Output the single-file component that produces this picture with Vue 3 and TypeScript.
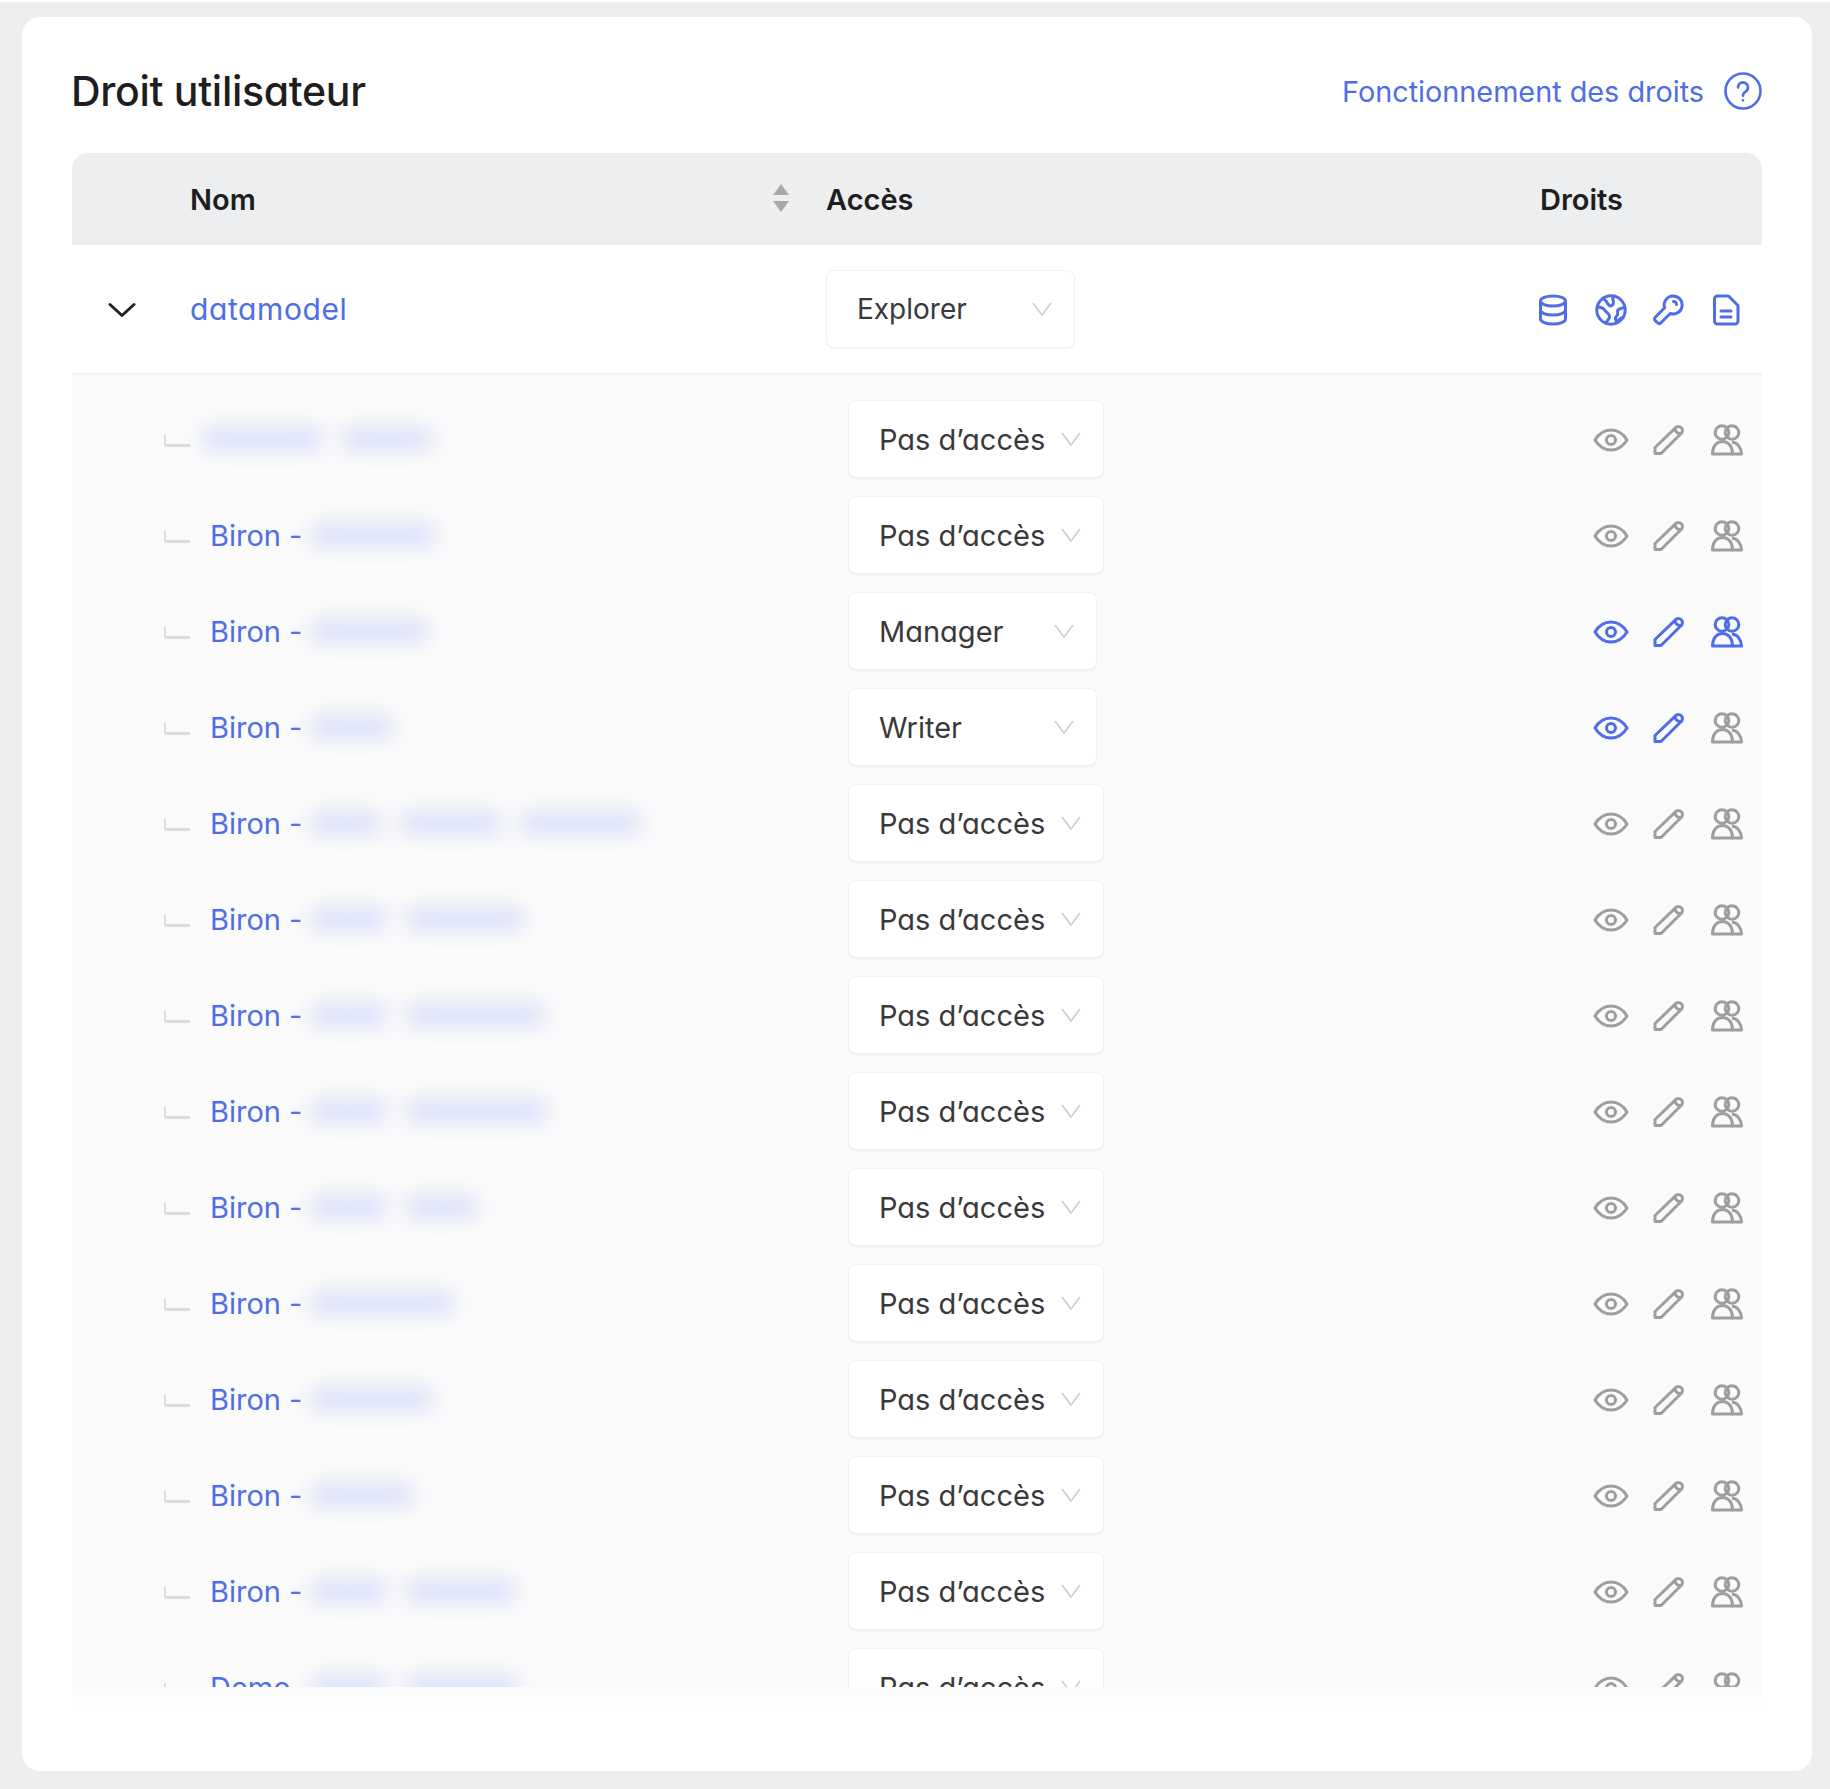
<script setup lang="ts">
type Access = 'Pas d’accès' | 'Manager' | 'Writer'

interface Child {
  prefix: string
  blobs: number[]
  access: Access
}

const none: Access = 'Pas d’accès'

const children: Child[] = [
  { prefix: '', blobs: [120, 90], access: none },
  { prefix: 'Biron -', blobs: [125], access: none },
  { prefix: 'Biron -', blobs: [118], access: 'Manager' },
  { prefix: 'Biron -', blobs: [83], access: 'Writer' },
  { prefix: 'Biron -', blobs: [70, 100, 121], access: none },
  { prefix: 'Biron -', blobs: [76, 118], access: none },
  { prefix: 'Biron -', blobs: [76, 139], access: none },
  { prefix: 'Biron -', blobs: [76, 141], access: none },
  { prefix: 'Biron -', blobs: [76, 71], access: none },
  { prefix: 'Biron -', blobs: [144], access: none },
  { prefix: 'Biron -', blobs: [123], access: none },
  { prefix: 'Biron -', blobs: [103], access: none },
  { prefix: 'Biron -', blobs: [76, 109], access: none },
  { prefix: 'Demo -', blobs: [76, 112], access: none },
]

// how many of eye / pen / users are lit for an access level
function rightsLevel(access: Access): number {
  if (access === 'Manager') return 3
  if (access === 'Writer') return 2
  return 0
}
</script>

<template>
  <div class="page">
    <div class="card">
      <header class="head">
        <h1 class="title">Droit utilisateur</h1>
        <a class="help">
          <span>Fonctionnement des droits</span>
          <svg class="help-icon" viewBox="0 0 38 38" fill="none" stroke="currentColor" stroke-width="2.6" stroke-linecap="round">
            <circle cx="19" cy="19" r="17.5" />
            <path d="M14 15.5a5 5 0 1 1 7.6 4.2c-1.8 1.1-2.6 2.1-2.6 4" />
            <path d="M19 28.2v.1" />
          </svg>
        </a>
      </header>

      <div class="table">
        <div class="thead">
          <span class="th-name">Nom</span>
          <span class="sort"><i class="up"></i><i class="down"></i></span>
          <span class="th-access">Accès</span>
          <span class="th-rights">Droits</span>
        </div>

        <div class="root-row">
          <span class="toggle">
            <svg viewBox="0 0 28 16" fill="none" stroke="currentColor" stroke-width="3" stroke-linecap="round" stroke-linejoin="round">
              <path d="M2 2.500l12 11 12-11" />
            </svg>
          </span>
          <span class="root-name">datamodel</span>
          <div class="select root-select">
            <span>Explorer</span>
            <svg class="caret" viewBox="0 0 20 14" fill="none" stroke="currentColor" stroke-width="1.8"><path d="M1 1l9 12 9-12" /></svg>
          </div>
          <div class="icons on">
            <svg viewBox="0 0 32 32" fill="none" stroke="currentColor" stroke-width="3">
              <ellipse cx="16" cy="7" rx="12.5" ry="5" />
              <path d="M3.5 7v18c0 2.8 5.6 5 12.5 5s12.5-2.2 12.5-5V7" />
              <path d="M3.5 16c0 2.8 5.6 5 12.5 5s12.5-2.2 12.5-5" />
            </svg>
            <svg viewBox="0 0 32 32" fill="none" stroke="currentColor" stroke-width="3" stroke-linejoin="round" stroke-linecap="round">
              <circle cx="16" cy="16" r="14.2" />
              <path d="M8 4.500c2.500 1.500 4 3.500 5 5.500s3 2.500 4.500 1 1-3.500.5-5 0-3 1.500-4" />
              <path d="M2.500 13c3 0 6 1 7.500 3.500s4.500 2.500 4.500 6-3 3.500-3.500 7" />
              <path d="M29.500 13c-2 2-5 1-6.500 3s1 3.500-1 5.500-2 4.500 0 7" />
              <path d="M22 28.500c1-2 3-4 6-5" />
            </svg>
            <svg viewBox="0 0 32 32" fill="none" stroke="currentColor" stroke-width="3" stroke-linejoin="round" stroke-linecap="round">
              <path d="M20 2a9 9 0 1 1-2.800 17.500L8 28.800a2.500 2.500 0 0 1-3.500 0l-2.200-2.200a2.400 2.400 0 0 1 0-3.400l9.300-9.400A9 9 0 0 1 20 2z" />
              <path d="M20.500 7.500a3 3 0 0 1 3 3" />
            </svg>
            <svg viewBox="0 0 32 32" fill="none" stroke="currentColor" stroke-width="3" stroke-linejoin="round" stroke-linecap="round">
              <path d="M6.500 2h11l9.500 9.500V27a3 3 0 0 1-3 3H6.500a3 3 0 0 1-3-3V5a3 3 0 0 1 3-3z" />
              <path d="M10 17h10M10 23h10" />
            </svg>
          </div>
        </div>

        <div class="children">
          <div v-for="(child, i) in children" :key="i" class="child-row">
            <span class="connector"></span>
            <div class="name">
              <span v-if="child.prefix" class="prefix">{{ child.prefix }}</span>
              <span
                v-for="(w, j) in child.blobs"
                :key="j"
                class="blob"
                :class="{ bare: !child.prefix && j === 0 }"
                :style="{ width: w + 'px' }"
              ></span>
            </div>
            <div class="select" :class="child.access === none ? 'wide' : 'narrow'">
              <span>{{ child.access }}</span>
              <svg class="caret" viewBox="0 0 20 14" fill="none" stroke="currentColor" stroke-width="1.8"><path d="M1 1l9 12 9-12" /></svg>
            </div>
            <div class="icons">
              <svg :class="{ lit: rightsLevel(child.access) >= 1 }" viewBox="0 0 36 32" fill="none" stroke="currentColor" stroke-width="3">
                <path d="M2 16C6 9.500 11 6 18 6s12 3.500 16 10c-4 6.500-9 10-16 10S6 22.500 2 16z" />
                <circle cx="18" cy="16" r="4.500" />
              </svg>
              <svg :class="{ lit: rightsLevel(child.access) >= 2 }" viewBox="0 0 32 32" fill="none" stroke="currentColor" stroke-width="3" stroke-linejoin="round" stroke-linecap="round">
                <path d="M22.500 3.800a4 4 0 1 1 5.600 5.700L8 29.500H2v-6z" />
                <path d="M22.500 3.800c-.8 1.800 0 3.200 1 4.200s2.500 1.900 4.600 1.500" />
              </svg>
              <svg :class="{ lit: rightsLevel(child.access) >= 3 }" viewBox="0 0 32 32" fill="none" stroke="currentColor" stroke-width="3" stroke-linejoin="round">
                <circle cx="11" cy="8.500" r="6.800" />
                <circle cx="21" cy="8.500" r="6.800" />
                <path d="M1.500 30c0-7.500 4-12.500 10-12.500S21.500 22.500 21.500 30z" />
                <path d="M21 18c5.500.5 9 5.500 9.500 12h-9" />
              </svg>
            </div>
          </div>
        </div>
        <div class="fade"></div>
      </div>
    </div>
  </div>
</template>

<style scoped>
.page {
  box-sizing: border-box;
  width: 1830px;
  height: 1789px;
  padding: 15px 18px 18px 22px;
  background: #eceef0;
  border-top: 2px solid #fff;
  font-family: Inter, 'Liberation Sans', sans-serif;
  font-feature-settings: 'cv11';
  color: #1e1e20;
}
.card {
  box-sizing: border-box;
  height: 100%;
  padding: 0 50px;
  background: #fff;
  border-radius: 18px;
}
.head {
  box-sizing: border-box;
  display: flex;
  align-items: center;
  justify-content: space-between;
  height: 136px;
  padding-top: 12px;
}
.title {
  margin: 0 0 0 -1px;
  font-size: 41px;
  font-weight: 500;
  letter-spacing: -0.3px;
}
.help {
  display: flex;
  align-items: center;
  gap: 20px;
  font-size: 28.8px;
  color: #4f6de6;
}
.help-icon {
  width: 38px;
  height: 38px;
}
.thead {
  position: relative;
  display: flex;
  align-items: center;
  height: 92px;
  padding-left: 118px;
  background: #eceef0;
  border-radius: 16px 16px 0 0;
  font-size: 29px;
  font-weight: 600;
}
.th-name {
  width: 636px;
}
.th-rights {
  margin-left: auto;
  margin-right: 139px;
}
.sort {
  position: absolute;
  left: 701px;
  top: 31px;
  display: flex;
  flex-direction: column;
  gap: 6px;
}
.sort i {
  display: block;
  width: 0;
  height: 0;
  border-left: 8px solid transparent;
  border-right: 8px solid transparent;
}
.sort .up {
  border-bottom: 11px solid #a6a8aa;
}
.sort .down {
  border-top: 11px solid #a6a8aa;
}
.root-row {
  display: flex;
  align-items: center;
  height: 128px;
  border-bottom: 2px solid #f0f1f2;
}
.toggle {
  box-sizing: border-box;
  display: flex;
  justify-content: center;
  width: 118px;
  padding-right: 18px;
  padding-top: 2px;
  color: #222;
}
.toggle svg {
  width: 28px;
  height: 16px;
}
.root-name {
  width: 636px;
  font-size: 30px;
  letter-spacing: 0.6px;
  color: #4f6de6;
}
.select {
  box-sizing: border-box;
  display: flex;
  align-items: center;
  justify-content: space-between;
  height: 78px;
  padding: 0 22px 0 30px;
  background: #fff;
  border: 1px solid #f1f1f2;
  border-radius: 8px;
  box-shadow: 0 1px 2px rgba(0, 0, 0, 0.04);
  font-size: 29px;
  color: #39393b;
}
.root-select {
  width: 249px;
  font-size: 28px;
}
.wide {
  width: 256px;
}
.narrow {
  width: 249px;
}
.caret {
  width: 20px;
  height: 14px;
  color: #cfd0d2;
}
.icons {
  display: flex;
  gap: 22px;
  margin-left: auto;
  margin-right: 17px;
  margin-top: 2px;
  color: #9c9ea1;
}
.icons svg {
  width: 36px;
  height: 32px;
}
.icons.on,
.icons .lit {
  color: #4f6de6;
}
.children {
  height: 1312px;
  padding-top: 16px;
  box-sizing: border-box;
  overflow: hidden;
  background: #fafafb;
}
.child-row {
  display: flex;
  align-items: center;
  height: 96px;
  padding-left: 92px;
}
.connector {
  box-sizing: border-box;
  width: 26px;
  height: 12px;
  margin-right: 20px;
  margin-top: 4px;
  border-left: 2px solid #dcdcdd;
  border-bottom: 3px solid #dcdcdd;
  border-bottom-left-radius: 3px;
}
.name {
  display: flex;
  align-items: center;
  width: 638px;
  font-size: 29px;
  color: #4f6de6;
}
.prefix {
  width: 100px;
  white-space: nowrap;
}
.blob {
  height: 22px;
  margin-right: 20px;
  background: #d9def8;
  border-radius: 11px;
  filter: blur(10px);
}
.blob.bare {
  margin-left: -8px;
}
.fade {
  height: 25px;
  background: linear-gradient(#fbfbfc, #fff);
}
</style>
